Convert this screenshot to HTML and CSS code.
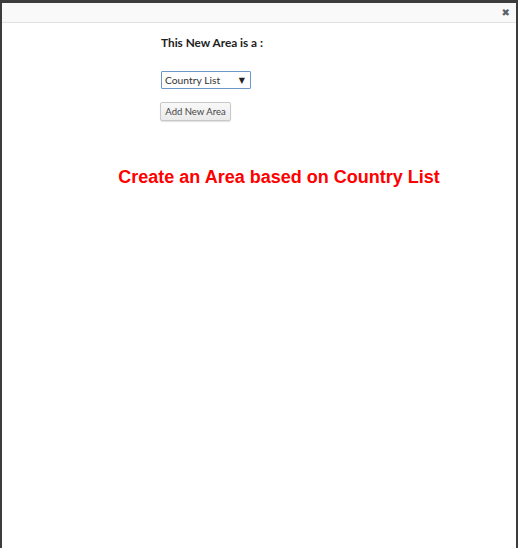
FILE: index.html
```html
<!DOCTYPE html>
<html>
<head>
<meta charset="utf-8">
<link rel="stylesheet" href="styles.css">
</head>
<body>
<div class="modal">
  <div class="modal-header">
    <span class="close">&#x2716;</span>
  </div>
  <div class="modal-body">
    <div class="form">
      <div class="label">This New Area is a :</div>
      <div class="select">
        <span>Country List</span>
        <span class="arrow">&#9660;</span>
      </div>
      <button class="btn">Add New Area</button>
    </div>
    <div class="notice">Create an Area based on Country List</div>
  </div>
</div>
</body>
</html>
```

FILE: styles.css
```css
html, body {
  margin: 0;
  padding: 0;
  height: 100%;
}
body {
  background: #3c3c3c;
  padding: 3px 2px 0 2px;
  box-sizing: border-box;
}
.modal {
  background: #ffffff;
  height: 100%;
  display: flex;
  flex-direction: column;
}
.modal-header {
  height: 19px;
  background: #f9f9f9;
  border-bottom: 1px solid #e2e2e2;
  display: flex;
  justify-content: flex-end;
  align-items: center;
  padding-right: 6px;
}
.close {
  font-family: "DejaVu Sans", sans-serif;
  font-size: 10px;
  color: #5a5f6a;
  line-height: 1;
  margin-top: 1px;
}
.modal-body {
  flex: 1;
  display: flex;
  flex-direction: column;
}
.form {
  padding-left: 159px;
  padding-top: 13px;
  display: flex;
  flex-direction: column;
  align-items: flex-start;
  font-family: "Lato", "Open Sans", sans-serif;
  color: #333;
}
.label {
  font-weight: bold;
  font-size: 11.8px;
  color: #222;
  line-height: 14px;
}
.select {
  margin-top: 21px;
  width: 80px;
  height: 16px;
  border: 1.5px solid #6f97c9;
  border-radius: 1px;
  display: flex;
  justify-content: space-between;
  align-items: center;
  padding: 0 5px 0 3px;
  font-size: 10.3px;
  color: #333;
  background: #fff;
}
.arrow {
  font-family: "DejaVu Sans", sans-serif;
  font-size: 8px;
  color: #222;
}
.btn {
  margin-top: 13px;
  margin-left: -1px;
  height: 19px;
  width: 71px;
  padding: 0;
  font-family: "Lato", "Open Sans", sans-serif;
  font-size: 9.5px;
  color: #444;
  background: linear-gradient(#f8f8f8, #ebebeb);
  border: 1px solid #c8c8c8;
  border-radius: 2px;
  box-shadow: 0 1px 1px rgba(0,0,0,0.12);
}
.notice {
  margin-top: 46px;
  text-align: center;
  padding-left: 40px;
  font-family: "Liberation Sans", Arial, sans-serif;
  font-weight: bold;
  font-size: 18px;
  color: #ff0000;
}
```
